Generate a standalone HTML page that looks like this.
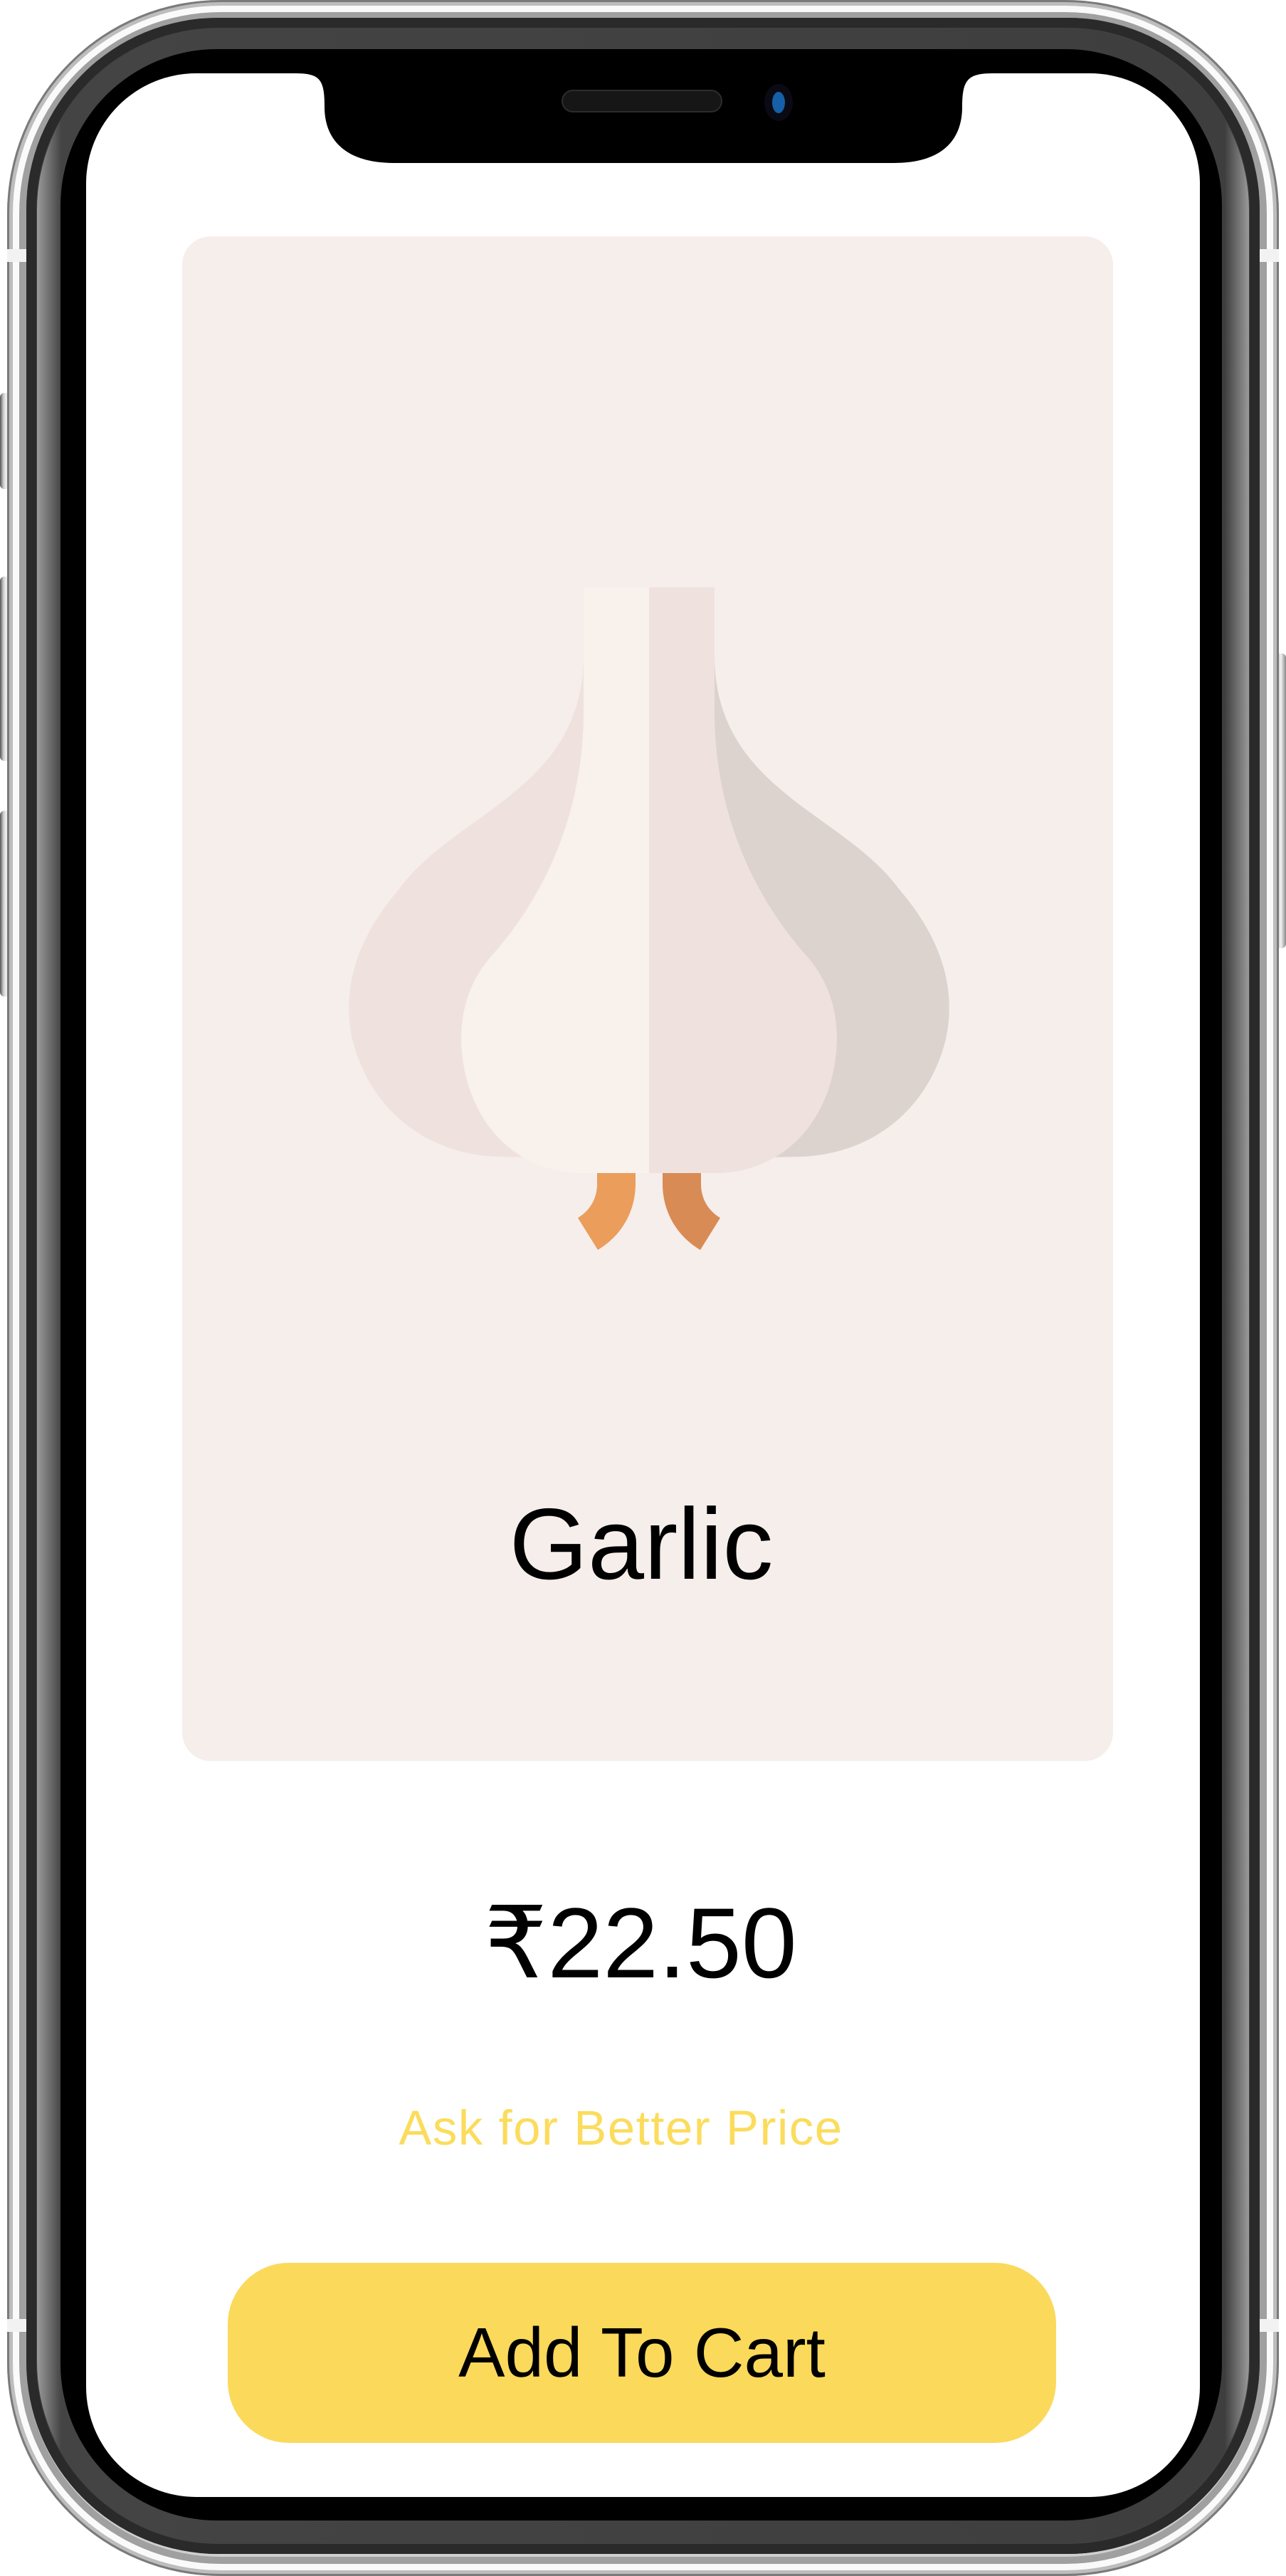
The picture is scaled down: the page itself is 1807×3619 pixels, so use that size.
<!DOCTYPE html>
<html><head><meta charset="utf-8">
<style>
*{margin:0;padding:0;box-sizing:border-box}
html,body{width:1807px;height:3619px;background:#fff;overflow:hidden;position:relative;font-family:"Liberation Sans",sans-serif}
.a{position:absolute}
.btn{background:linear-gradient(90deg,#555 0%,#ccc 30%,#f2f2f2 55%,#888 100%);border-radius:6px}
</style></head><body>
<div class="a btn" style="left:0;top:552px;width:16px;height:135px"></div>
<div class="a btn" style="left:0;top:810px;width:16px;height:259px"></div>
<div class="a btn" style="left:0;top:1139px;width:16px;height:261px"></div>
<div class="a btn" style="left:1791px;top:918px;width:16px;height:414px"></div>
<!-- silver frame -->
<div class="a" style="left:10px;top:0;width:1787px;height:3619px;border-radius:300px;background:#cfcfcf;box-shadow:inset 0 0 0 3px #7a7a7a,inset 0 0 0 8px #bdbdbd,inset 0 0 0 17px #fafafa,inset 0 0 0 27px #a0a0a0"></div>
<div class="a" style="left:10px;top:350px;width:27px;height:18px;background:#f2f2f2"></div>
<div class="a" style="left:1770px;top:350px;width:27px;height:18px;background:#f2f2f2"></div>
<div class="a" style="left:10px;top:3258px;width:27px;height:18px;background:#f2f2f2"></div>
<div class="a" style="left:1770px;top:3258px;width:27px;height:18px;background:#f2f2f2"></div>
<!-- dark band -->
<div class="a" style="left:37px;top:25px;width:1733px;height:3563px;border-radius:270px;background:#424242;box-shadow:inset 0 0 0 14px #2a2a2a"></div>
<div class="a" style="left:52px;top:40px;width:1703px;height:3533px;border-radius:255px;background:linear-gradient(90deg,#9a9a9a 0,#444 2%,#3e3e3e 98%,#9a9a9a 100%)"></div>
<!-- black bezel -->
<div class="a" style="left:85px;top:69px;width:1632px;height:3472px;border-radius:220px;background:#000"></div>
<!-- screen -->
<div class="a" style="left:121px;top:103px;width:1565px;height:3405px;border-radius:155px;background:#fff"></div>
<!-- notch -->
<svg class="a" style="left:0;top:0" width="1807" height="260" viewBox="0 0 1807 260">
<path d="M415,100 H1395 L1395,103 C1360,103 1352,112 1352,150 C1352,200 1320,229 1256,229 H553 C490,229 456,200 456,150 C456,112 450,103 415,103 Z" fill="#000"/>
<rect x="790" y="127" width="224" height="30" rx="15" fill="#161616" stroke="#2c2c2c" stroke-width="2"/>
<ellipse cx="1094" cy="144" rx="20" ry="26" fill="#0a0a14"/>
<ellipse cx="1094" cy="144" rx="9" ry="15" fill="#1560a8"/>
</svg>
<!-- card -->
<div class="a" style="left:256px;top:332px;width:1308px;height:2142px;border-radius:40px;background:#f6eeeb"></div>
<svg class="a" style="left:0;top:0" width="1807" height="2000" viewBox="0 0 1807 2000">
<path d="M820,920 C820,1110 640,1140 560,1250 C500,1320 480,1390 495,1460 C520,1560 600,1622 700,1625 L912,1630 V920 Z" fill="#efe2de"/>
<path d="M1004,920 C1004,1110 1184,1140 1264,1250 C1324,1320 1344,1390 1329,1460 C1304,1560 1224,1622 1124,1625 L912,1630 V920 Z" fill="#dcd3ce"/>
<path d="M839,1647 H893 V1663 C893,1700 875,1735 840,1756 L812,1711 C830,1700 839,1683 839,1663 Z" fill="#eb9d5b"/>
<path d="M985,1647 H931 V1663 C931,1700 949,1735 984,1756 L1012,1711 C994,1700 985,1683 985,1663 Z" fill="#d98b55"/>
<path d="M820,825 H912 V1648 H810 C710,1642 650,1560 648,1460 C648,1410 665,1370 695,1338 C780,1240 820,1120 820,1000 Z" fill="#f8f1ec"/>
<path d="M1004,825 H912 V1648 H1014 C1114,1642 1174,1560 1176,1460 C1176,1410 1159,1370 1129,1338 C1044,1240 1004,1120 1004,1000 Z" fill="#efe2de"/>
</svg>
<div class="a" style="left:256px;top:2090px;width:1290px;text-align:center;font-size:142px;line-height:160px;color:#000">Garlic</div>
<div class="a" style="left:300px;top:2650px;width:1200px;text-align:center;font-size:140px;line-height:160px;color:#000;font-family:'Liberation Sans','DejaVu Sans',sans-serif">₹22.50</div>
<div class="a" style="left:300px;top:2950px;width:1145px;text-align:center;font-size:69px;line-height:80px;color:#fbdc5c;letter-spacing:1.5px">Ask for Better Price</div>
<div class="a" style="left:320px;top:3179px;width:1164px;height:253px;border-radius:86px;background:#fbd95a;text-align:center;font-size:98px;line-height:253px;color:#000">Add To Cart</div>
</body></html>
